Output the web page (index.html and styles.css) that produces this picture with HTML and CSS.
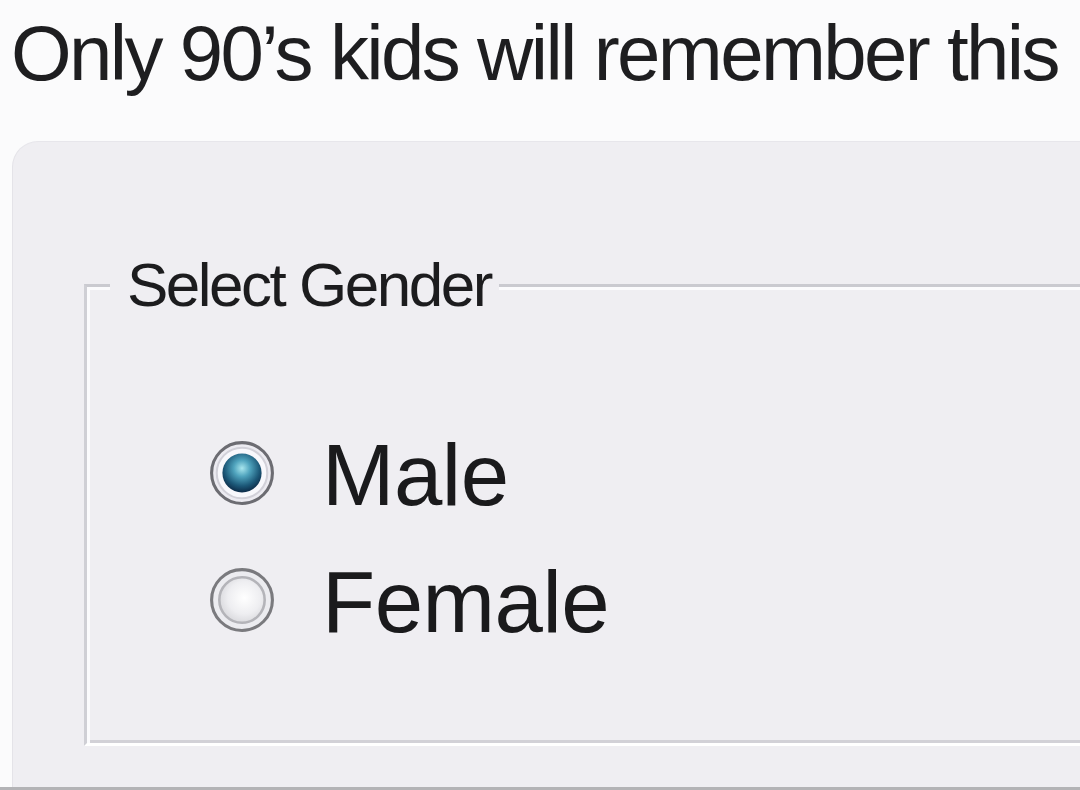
FILE: index.html
```html
<!DOCTYPE html>
<html lang="en">
<head>
<meta charset="utf-8">
<title>Only 90's kids will remember this</title>
<link rel="stylesheet" href="styles.css">
</head>
<body>
<div class="page">
  <header class="header">
    <h1 class="title">Only 90’s kids will remember this</h1>
  </header>
  <section class="panel">
    <fieldset class="group">
      <legend class="group-legend">Select Gender</legend>
      <div class="options">
        <label class="option">
          <svg class="radio" viewBox="0 0 64 64" width="66" height="66" aria-hidden="true">
            <defs>
              <radialGradient id="dotGrad" cx="50%" cy="38%" r="60%">
                <stop offset="0" stop-color="#a8e6ee"/>
                <stop offset="0.35" stop-color="#4fa3bd"/>
                <stop offset="0.75" stop-color="#1c5878"/>
                <stop offset="1" stop-color="#0e2f4c"/>
              </radialGradient>
            </defs>
            <circle cx="32" cy="32" r="29.5" fill="#ecebf1" stroke="#6c6c72" stroke-width="3"/>
            <circle cx="32" cy="32" r="24.5" fill="#f8f8fc" stroke="#d2d1d9" stroke-width="2"/>
            <circle cx="32" cy="32" r="19" fill="url(#dotGrad)"/>
          </svg>
          <span class="option-text">Male</span>
        </label>
        <label class="option">
          <svg class="radio" viewBox="0 0 64 64" width="66" height="66" aria-hidden="true">
            <defs>
              <radialGradient id="emptyGrad" cx="55%" cy="45%" r="60%">
                <stop offset="0" stop-color="#ffffff"/>
                <stop offset="0.6" stop-color="#eeeef1"/>
                <stop offset="1" stop-color="#d6d6da"/>
              </radialGradient>
            </defs>
            <circle cx="32" cy="32" r="29.5" fill="#ececf0" stroke="#7a7a7e" stroke-width="3"/>
            <circle cx="32" cy="32" r="22" fill="url(#emptyGrad)" stroke="#b4b4b9" stroke-width="2.5"/>
          </svg>
          <span class="option-text">Female</span>
        </label>
      </div>
    </fieldset>
  </section>
  <div class="bottom-edge"></div>
</div>
</body>
</html>
```
FILE: styles.css
```css
* {
  box-sizing: border-box;
}

html, body {
  margin: 0;
  padding: 0;
}

body {
  background: #fbfbfc;
  font-family: "Liberation Sans", Arial, sans-serif;
  color: #1c1c1e;
  width: 1080px;
  height: 790px;
  overflow: hidden;
}

.page {
  display: flex;
  flex-direction: column;
  width: 1080px;
  height: 790px;
}

.header {
  height: 141px;
  padding: 14px 0 0 11px;
  flex: none;
}

.title {
  margin: 0;
  font-weight: 400;
  font-size: 78px;
  line-height: 78px;
  letter-spacing: -2.65px;
  color: #1e1e20;
  white-space: nowrap;
}

.panel {
  flex: none;
  height: 646px;
  margin-left: 12px;
  background: #efeef2;
  border-top-left-radius: 26px;
  border-top: 1px solid #e7e6eb;
  border-left: 1px solid #e4e3e8;
  padding: 112px 0 0 71px;
  overflow: hidden;
}

.group {
  margin: 0 -40px 0 0;
  padding: 0 0 98px 23px;
  border-style: solid;
  border-width: 3px;
  border-color: #cacad0 #ffffff #ffffff #cfcfd5;
  box-shadow: inset 3px 3px 0 #fbfbfd, inset -3px -3px 0 #d2d1d7;
  min-width: 0;
}

.group-legend {
  padding: 0 8px 0 17px;
  font-size: 62px;
  line-height: 62px;
  letter-spacing: -2.5px;
  color: #1c1c1e;
  background: #efeef2;
}

.options {
  display: flex;
  flex-direction: column;
  gap: 40px;
  margin-left: 99px;
  padding-top: 115px;
}

.option {
  display: flex;
  align-items: center;
  gap: 47px;
  height: 87px;
}

.radio {
  flex: none;
  display: block;
  width: 66px;
  height: 66px;
  margin-top: -3px;
}

.option-text {
  font-size: 87px;
  line-height: 87px;
  letter-spacing: -0.5px;
  color: #1a1a1c;
}

.bottom-edge {
  flex: none;
  height: 3px;
  background: #b3b3b6;
}
```
